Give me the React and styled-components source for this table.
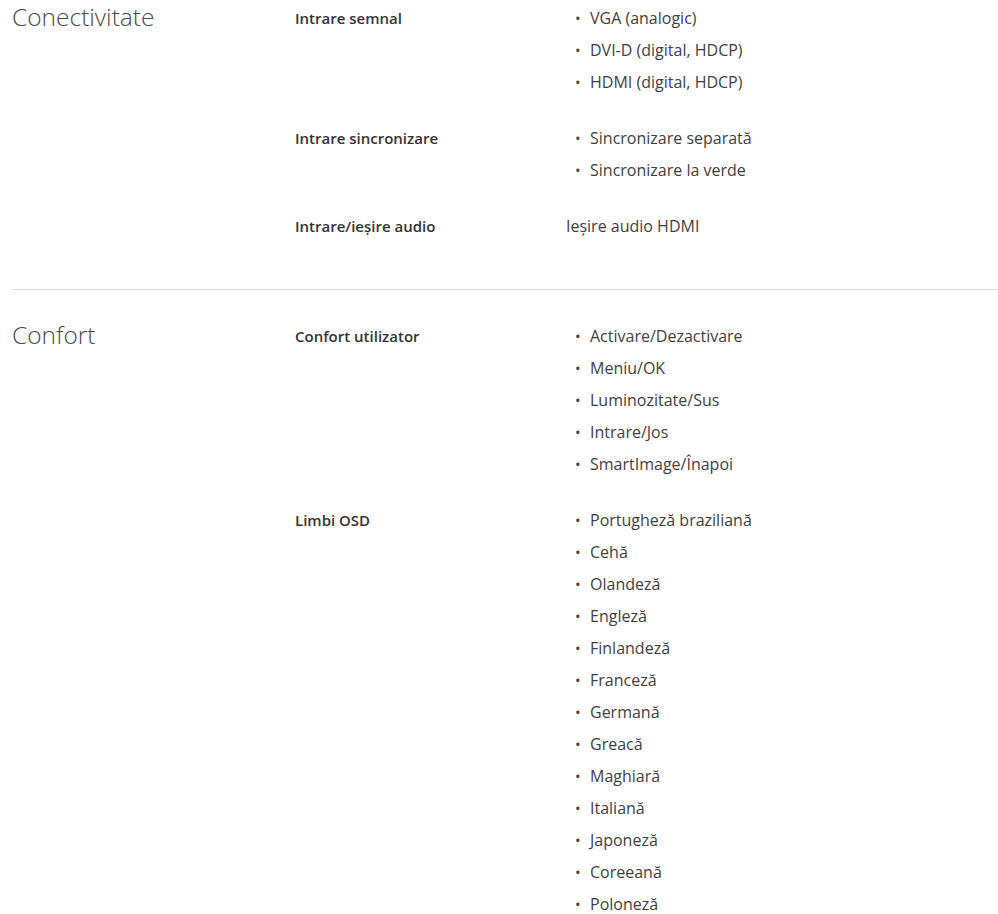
import React from 'react';
import styled, { createGlobalStyle } from 'styled-components';

const GlobalStyle = createGlobalStyle`
  body {
    margin: 0;
    background: #fff;
    font-family: "Open Sans", "Noto Sans", sans-serif;
    color: #3b3b3b;
  }
`;

const SPECS = [
  {
    title: 'Conectivitate',
    groups: [
      { label: 'Intrare semnal', items: ['VGA (analogic)', 'DVI-D (digital, HDCP)', 'HDMI (digital, HDCP)'] },
      { label: 'Intrare sincronizare', items: ['Sincronizare separată', 'Sincronizare la verde'] },
      { label: 'Intrare/ieșire audio', value: 'Ieșire audio HDMI' },
    ],
  },
  {
    title: 'Confort',
    groups: [
      {
        label: 'Confort utilizator',
        items: ['Activare/Dezactivare', 'Meniu/OK', 'Luminozitate/Sus', 'Intrare/Jos', 'SmartImage/Înapoi'],
      },
      {
        label: 'Limbi OSD',
        items: [
          'Portugheză braziliană', 'Cehă', 'Olandeză', 'Engleză', 'Finlandeză', 'Franceză',
          'Germană', 'Greacă', 'Maghiară', 'Italiană', 'Japoneză', 'Coreeană', 'Poloneză',
        ],
      },
    ],
  },
];

const Page = styled.div`
  padding: 0 0 0 12px;
`;

const Section = styled.section`
  display: grid;
  grid-template-columns: 283px 270px 1fr;
  padding: ${p => (p.$first ? '2px' : '30px')} 0 47px;
  border-bottom: ${p => (p.$last ? 'none' : '1px solid #dcdcdc')};
`;

const Title = styled.h2`
  margin: 0;
  font-size: 24.5px;
  font-weight: 300;
  line-height: 30px;
  color: #4a4a4a;
`;

const Groups = styled.div`
  grid-column: 2 / 4;
  display: flex;
  flex-direction: column;
  gap: 24px;
`;

const Group = styled.div`
  display: grid;
  grid-template-columns: 270px 1fr;
`;

const Label = styled.div`
  font-size: 15px;
  font-weight: 600;
  line-height: 32px;
  color: #333;
`;

const Value = styled.div`
  font-size: 16px;
  line-height: 32px;
  color: #3f3f3f;
  padding-left: 1px;
`;

const List = styled.ul`
  margin: 0;
  padding: 0;
  list-style: none;
`;

const Item = styled.li`
  font-size: 16px;
  line-height: 32px;
  color: #3f3f3f;
  padding-left: 25px;
  position: relative;

  &::before {
    content: '•';
    position: absolute;
    left: 10px;
    top: 0;
    font-size: 15px;
    color: #444;
  }
`;

export default function App() {
  return (
    <Page>
      <GlobalStyle />
      {SPECS.map((s, i) => (
        <Section key={s.title} $first={i === 0} $last={i === SPECS.length - 1}>
          <Title>{s.title}</Title>
          <Groups>
            {s.groups.map(g => (
              <Group key={g.label}>
                <Label>{g.label}</Label>
                {g.items ? (
                  <List>
                    {g.items.map(it => <Item key={it}>{it}</Item>)}
                  </List>
                ) : (
                  <Value>{g.value}</Value>
                )}
              </Group>
            ))}
          </Groups>
        </Section>
      ))}
    </Page>
  );
}
